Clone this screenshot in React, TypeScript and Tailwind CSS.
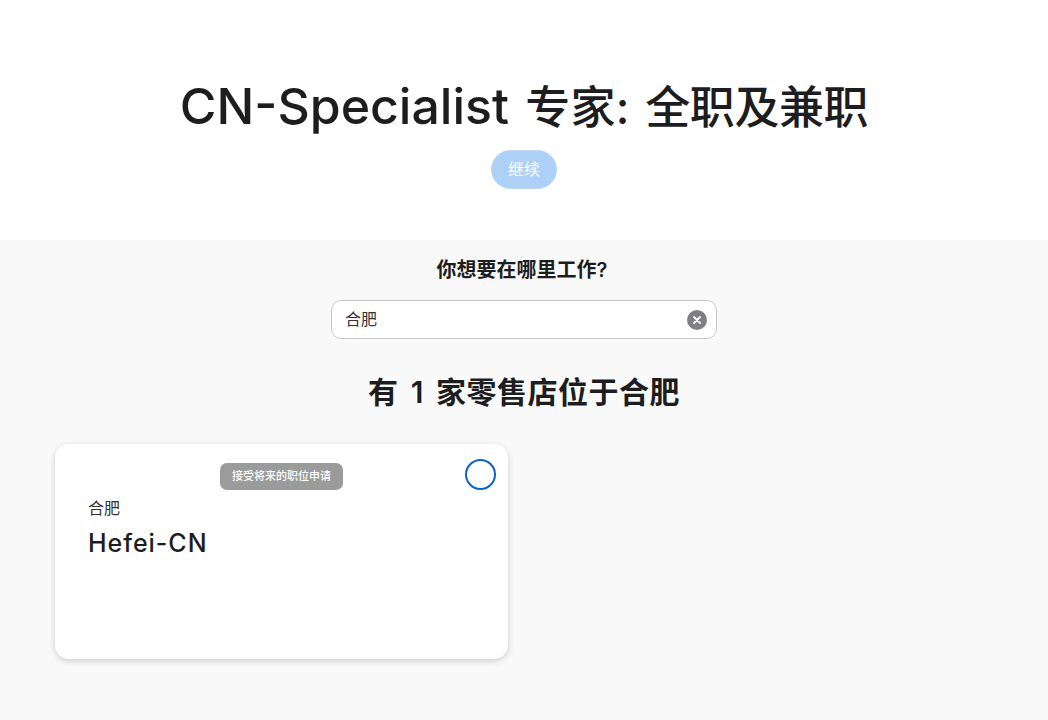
import React from 'react';

const font = "font-['Inter','Noto_Sans_CJK_SC',sans-serif]";

export default function App() {
  return (
    <div className={`w-full h-[720px] overflow-hidden bg-[#f9f9f9] text-[#1d1d1f] ${font}`}>
      <header className="bg-white h-[240px] flex flex-col items-center pt-[74px]">
        <h1 className="h-[64px] leading-[64px] whitespace-nowrap">
          <span className="text-[50px] font-[450] [word-spacing:3px]">CN-Specialist </span>
          <span className="text-[45px] font-medium tracking-[-0.4px] [word-spacing:4px]">
            <span className="tracking-[0.2px]">专家:</span> 全职及兼职
          </span>
        </h1>
        <button className="mt-[12px] h-[39px] w-[66px] pb-[2px] rounded-[20px] border border-[#bcd7f8] bg-[#add0f7] text-white text-[16px]">继续</button>
      </header>
      <main className="flex flex-col items-center">
        <h2 className="mt-[18px] mr-[4px] text-[20px] leading-[24px] font-semibold">你想要在哪里工作?</h2>
        <div className="mt-[18px] w-[386px] h-[39px] rounded-[10px] border-[1.5px] border-[#c9c9cb] bg-white flex items-center justify-between pl-[13px] pr-[9px]">
          <span className="text-[16px] leading-[24px] mb-[1px] text-[#333336]">合肥</span>
          <span className="w-[20px] h-[20px] rounded-full bg-[#808084] flex items-center justify-center">
            <svg width="10" height="10" viewBox="0 0 10 10" stroke="white" strokeWidth="1.8" strokeLinecap="round">
              <path d="M2 2l6 6M8 2l-6 6" />
            </svg>
          </span>
        </div>
        <h2 className="mt-[33px] text-[30px] leading-[40px] font-semibold tracking-[0.5px] [word-spacing:4px]">有 1 家零售店位于合肥</h2>
        <div className="self-start ml-[55px] mt-[32px] w-[453px] h-[215px] bg-white rounded-[14px] shadow-[0_2px_6px_rgba(0,0,0,0.18)] relative px-[33px] pt-[52px]">
          <span className="absolute left-[165px] top-[19px] w-[123px] h-[27px] rounded-[7px] bg-[#9b9b9b] text-white text-[11px] font-medium flex items-center justify-center">接受将来的职位申请</span>
          <span className="absolute right-[12px] top-[15px] w-[31px] h-[31px] rounded-full border-[2.5px] border-[#0a63c9] bg-white" />
          <p className="text-[16px] leading-[24px] text-[#333336]">合肥</p>
          <p className="mt-[5px] text-[25px] leading-[36px] font-medium tracking-[0.95px]">Hefei-CN</p>
        </div>
      </main>
    </div>
  );
}
